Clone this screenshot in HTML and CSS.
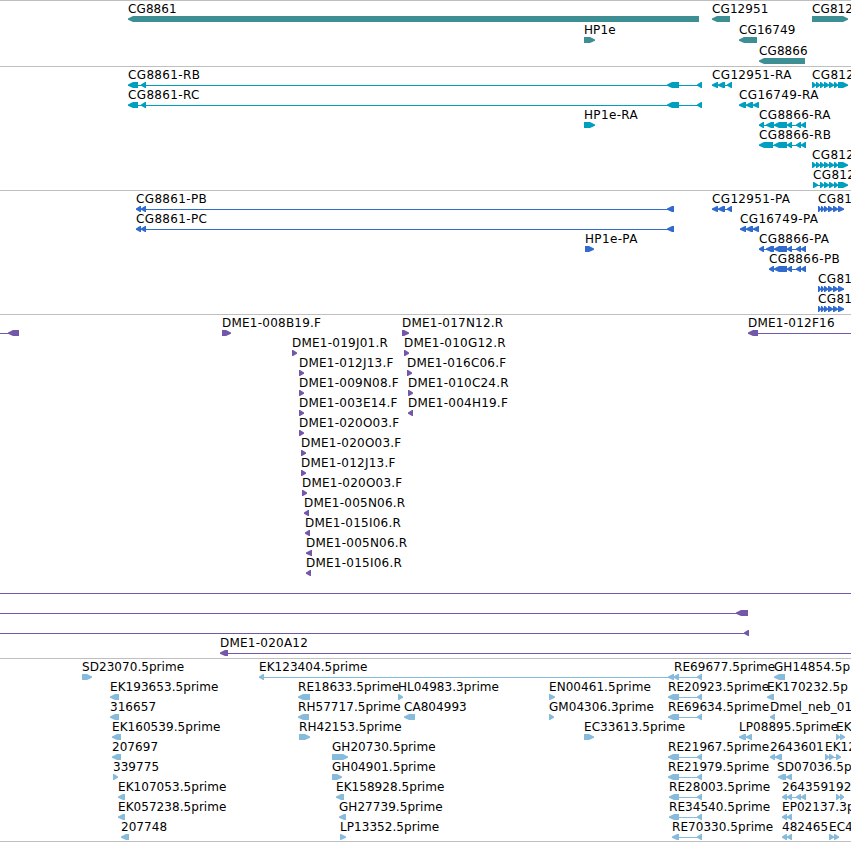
FILE: index.html
```html
<!DOCTYPE html>
<html lang="en">
<head>
<meta charset="utf-8">
<title>Genome tracks</title>
<link rel="stylesheet" href="styles.css">
</head>
<body>
<main class="browser" id="browser"></main>
<script src="tracks.js"></script>
</body>
</html>
```
FILE: styles.css
```css
body {
  margin: 0;
  background: #fff;
  overflow: hidden;
}

.browser {
  display: flex;
  flex-direction: column;
  width: 851px;
  border-bottom: 1px solid #bfbfbf;
}

.track {
  border-top: 1px solid #bfbfbf;
}

.track svg {
  display: block;
  overflow: hidden;
}

.track text {
  font-family: "DejaVu Sans", sans-serif;
  font-size: 12px;
  fill: #000;
}

.track polygon,
.track rect {
  fill: currentColor;
}

.track rect {
  shape-rendering: crispEdges;
}

.genes { color: #3e8f93; letter-spacing: 0.1px; }
.transcripts { color: #009fbf; letter-spacing: 0.35px; }
.proteins { color: #316bcd; letter-spacing: 0.35px; }
.clones { color: #7357a8; letter-spacing: 0.23px; }
.ests { color: #86bbdc; letter-spacing: 0.05px; }
```
FILE: tracks.js
```js
// Feature: [row, label, labelX, direction, [[start, end], ...], lineStart, lineEnd]
const L = 'L', R = 'R';
const model8861 = [[128, 138], [141, 146], [667, 679], [697, 702]];
const exons812 = [[812, 816], [816, 820], [820, 824], [824, 829], [829, 834], [834, 838], [838, 848]];
const exons81 = [[818, 821], [821, 824], [824, 828], [828, 833], [833, 838], [838, 844]];
const tail8866 = [[774, 787], [787, 792], [796, 801], [801, 806]];
const re = start => [[start, 679], [697, 702]];

const tracks = [
  { name: 'genes', height: 65, step: 21, features: [
    [0, 'CG8861', 128, L, [[128, 699]]],
    [0, 'CG12951', 712, L, [[712, 730]]],
    [0, 'CG812', 812, R, [[812, 848]]],
    [1, 'HP1e', 584, R, [[584, 595]]],
    [1, 'CG16749', 739, L, [[739, 757]]],
    [2, 'CG8866', 759, L, [[759, 805]]]
  ]},
  { name: 'transcripts', height: 123, step: 20, features: [
    [0, 'CG8861-RB', 128, L, model8861],
    [1, 'CG8861-RC', 128, L, model8861],
    [2, 'HP1e-RA', 584, R, [[584, 595]]],
    [0, 'CG12951-RA', 712, L, [[712, 718], [718, 725], [727, 732]]],
    [1, 'CG16749-RA', 739, L, [[739, 746], [746, 753], [753, 759]]],
    [2, 'CG8866-RA', 759, L, [[759, 764], [766, 774], ...tail8866]],
    [3, 'CG8866-RB', 759, L, [[759, 773], ...tail8866]],
    [0, 'CG812', 812, R, exons812],
    [4, 'CG812', 812, R, exons812],
    [5, 'CG812', 813, R, [[813, 818], ...exons812.slice(2)]]
  ]},
  { name: 'proteins', height: 123, step: 20, features: [
    [0, 'CG8861-PB', 136, L, [[136, 141], [141, 146], [667, 674]]],
    [1, 'CG8861-PC', 136, L, [[136, 141], [141, 146], [667, 674]]],
    [2, 'HP1e-PA', 585, R, [[585, 594]]],
    [0, 'CG12951-PA', 712, L, [[712, 718], [718, 725], [727, 732]]],
    [1, 'CG16749-PA', 740, L, [[740, 746], [746, 753], [753, 759]]],
    [2, 'CG8866-PA', 759, L, [[759, 764], [766, 774], ...tail8866]],
    [3, 'CG8866-PB', 769, L, [[769, 774], ...tail8866]],
    [0, 'CG81', 818, R, exons81],
    [4, 'CG81', 818, R, exons81],
    [5, 'CG81', 818, R, exons81]
  ]},
  { name: 'clones', height: 343, step: 20, features: [
    [0, '', 0, L, [[8, 19]], 0, 19],
    [0, 'DME1-008B19.F', 222, R, [[222, 231]]],
    [0, 'DME1-017N12.R', 402, R, [[402, 409]]],
    [0, 'DME1-012F16', 748, L, [[748, 758]], 748, 851],
    [1, 'DME1-019J01.R', 292, R, [[292, 297]]],
    [1, 'DME1-010G12.R', 404, R, [[404, 409]]],
    [2, 'DME1-012J13.F', 299, R, [[299, 304]]],
    [2, 'DME1-016C06.F', 407, R, [[407, 412]]],
    [3, 'DME1-009N08.F', 299, R, [[299, 304]]],
    [3, 'DME1-010C24.R', 408, R, [[408, 413]]],
    [4, 'DME1-003E14.F', 299, R, [[299, 304]]],
    [4, 'DME1-004H19.F', 408, L, [[408, 413]]],
    [5, 'DME1-020O03.F', 299, R, [[299, 304]]],
    [6, 'DME1-020O03.F', 301, R, [[301, 306]]],
    [7, 'DME1-012J13.F', 301, R, [[301, 306]]],
    [8, 'DME1-020O03.F', 302, R, [[302, 307]]],
    [9, 'DME1-005N06.R', 304, L, [[304, 309]]],
    [10, 'DME1-015I06.R', 305, L, [[305, 310]]],
    [11, 'DME1-005N06.R', 306, L, [[306, 312]]],
    [12, 'DME1-015I06.R', 306, L, [[306, 311]]],
    [13, '', 0, L, [], 0, 851],
    [14, '', 0, L, [[736, 748]], 0, 748],
    [15, '', 0, L, [[744, 749]], 0, 749],
    [16, 'DME1-020A12', 220, L, [[220, 228]], 220, 851]
  ]},
  { name: 'ests', height: 182, step: 20, features: [
    [0, 'SD23070.5prime', 82, R, [[82, 92]]],
    [1, 'EK193653.5prime', 110, L, [[110, 119]]],
    [2, '316657', 110, L, [[110, 119]]],
    [3, 'EK160539.5prime', 112, L, [[112, 121]]],
    [4, '207697', 112, L, [[112, 121]]],
    [5, '339775', 113, R, [[113, 118]]],
    [6, 'EK107053.5prime', 118, L, [[118, 125]]],
    [7, 'EK057238.5prime', 118, L, [[118, 125]]],
    [8, '207748', 121, L, [[121, 129]]],
    [0, 'EK123404.5prime', 259, L, [[259, 264], [668, 674], [674, 679]]],
    [1, 'RE18633.5prime', 298, L, [[298, 310]]],
    [2, 'RH57717.5prime', 298, L, [[298, 309]]],
    [3, 'RH42153.5prime', 299, R, [[299, 310]]],
    [4, 'GH20730.5prime', 332, R, [[332, 348]]],
    [5, 'GH04901.5prime', 332, R, [[332, 342]]],
    [6, 'EK158928.5prime', 336, L, [[336, 344]]],
    [7, 'GH27739.5prime', 339, L, [[339, 346]]],
    [8, 'LP13352.5prime', 340, R, [[340, 346]]],
    [1, 'HL04983.3prime', 398, R, [[398, 403]]],
    [2, 'CA804993', 404, L, [[404, 415]]],
    [1, 'EN00461.5prime', 549, R, [[549, 555]]],
    [2, 'GM04306.3prime', 549, R, [[549, 554]]],
    [3, 'EC33613.5prime', 584, R, [[584, 594]]],
    [0, 'RE69677.5prime', 674, L, [[674, 679], [697, 702]]],
    [1, 'RE20923.5prime', 668, L, re(668)],
    [2, 'RE69634.5prime', 668, L, re(668)],
    [4, 'RE21967.5prime', 668, L, re(668)],
    [5, 'RE21979.5prime', 668, L, re(668)],
    [6, 'RE28003.5prime', 669, L, re(669)],
    [7, 'RE34540.5prime', 669, L, re(669)],
    [8, 'RE70330.5prime', 672, L, re(672)],
    [0, 'GH14854.5p', 774, L, [[774, 785]]],
    [1, 'EK170232.5p', 767, L, [[767, 774]]],
    [2, 'Dmel_neb_01', 770, L, [[770, 775]]],
    [3, 'LP08895.5prime', 739, L, [[739, 746], [746, 752]]],
    [3, 'EK', 836, R, [[836, 840], [840, 845]]],
    [4, '2643601', 770, L, [[770, 775], [775, 782]]],
    [4, 'EK12', 825, R, [[825, 829], [829, 834], [836, 841]]],
    [5, 'SD07036.5p', 777, L, [[778, 786], [786, 792]]],
    [6, '2643591', 782, L, [[782, 787], [787, 792], [796, 801], [801, 806]]],
    [6, '92', 836, R, [[836, 840], [840, 844]]],
    [7, 'EP02137.3p', 782, L, [[782, 787], [787, 792]]],
    [8, '482465', 782, L, [[782, 787], [787, 792]]],
    [8, 'EC4', 829, R, [[829, 834], [834, 839]]]
  ]}
];

// Block with a blunt arrow tip on the side it points to.
function block(start, end, dir, top) {
  const head = Math.min(5, end - start - 1);
  const low = top + 6;
  const tip = dir === L ? start : end;
  const neck = dir === L ? start + head : end - head;
  const base = dir === L ? end : start;
  const points = [[tip, top + 2.5], [neck, top], [base, top], [base, low], [neck, low], [tip, top + 3.8]];
  return `<polygon points="${points.map(p => p.join()).join(' ')}"/>`;
}

function draw([row, label, labelX, dir, parts, from, to], step) {
  const top = 15 + row * step;
  const x0 = from ?? parts[0][0];
  const x1 = to ?? parts[parts.length - 1][1];
  let out = '';
  if (parts.length !== 1 || from !== undefined) {
    out += `<rect x="${x0}" y="${top + 3}" width="${x1 - x0}" height="1"/>`;
  }
  out += parts.map(([a, b]) => block(a, b, dir, top)).join('');
  if (label) {
    out += `<text x="${labelX}" y="${top - 3}">${label}</text>`;
  }
  return out;
}

document.getElementById('browser').innerHTML = tracks.map(t =>
  `<section class="track ${t.name}"><svg width="851" height="${t.height}">${
    t.features.map(f => draw(f, t.step)).join('')}</svg></section>`).join('');
```
